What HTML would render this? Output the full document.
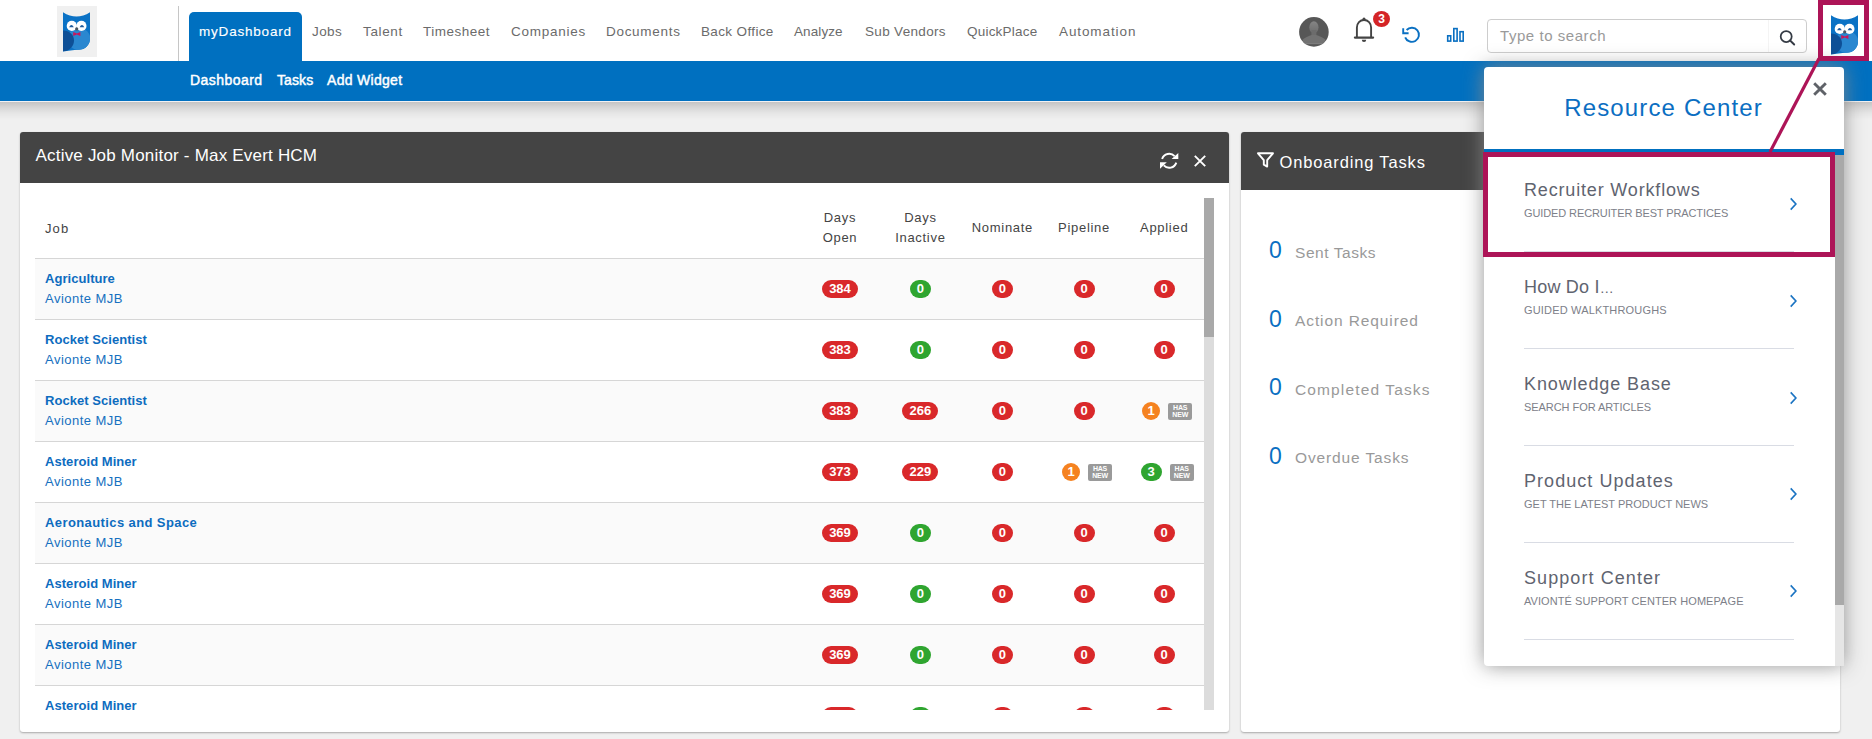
<!DOCTYPE html>
<html><head><meta charset="utf-8">
<style>
*{box-sizing:border-box;margin:0;padding:0}
html,body{width:1872px;height:739px;overflow:hidden;background:#f0f0f0;font-family:"Liberation Sans",sans-serif;position:relative}
.a{position:absolute}
#top{position:absolute;left:0;top:0;width:1872px;height:61px;background:#fff}
#logo{position:absolute;left:57px;top:6px;width:40px;height:51px;background:#f0f0f0}
#vdiv{position:absolute;left:178px;top:6px;width:1px;height:55px;background:#c6c6c6}
.nav{position:absolute;top:22.7px;font-size:13.5px;color:#6b6b6b;letter-spacing:.6px;white-space:nowrap;line-height:18px}
#tab{position:absolute;left:189px;top:12px;width:113px;height:50px;background:#0070c0;border-radius:5px 5px 0 0}
#sub{position:absolute;left:0;top:61px;width:1872px;height:40px;background:#0070c0}
#subl{position:absolute;left:0;top:101px;width:1872px;height:1px;background:#f1f1f3}
#subs{position:absolute;left:0;top:102px;width:1872px;height:18px;background:linear-gradient(rgba(0,0,0,.185),rgba(0,0,0,.11) 30%,rgba(0,0,0,.045) 62%,rgba(0,0,0,0))}
.subi{position:absolute;top:71px;font-size:14px;color:#fff;line-height:18px;font-weight:normal;-webkit-text-stroke:.45px #fff;white-space:nowrap}
.panel{position:absolute;top:132px;height:600px;background:#fff;border-radius:3px;box-shadow:0 1px 2px rgba(0,0,0,.3)}
.ph{position:absolute;left:0;top:0;right:0;background:#444;border-radius:3px 3px 0 0}
.ptitle{position:absolute;color:#fff;font-size:17px;line-height:20px;white-space:nowrap}
#tbl{position:absolute;left:35px;top:198px;width:1179px;height:512px;overflow:hidden}
.th{position:absolute;font-size:13px;color:#444;line-height:20px;text-align:center;white-space:nowrap;letter-spacing:.7px}
.tr{position:absolute;left:0;width:1169px;height:61px;border-top:1px solid #d6d6d6}
.jt{position:absolute;left:10px;top:10px;font-size:13px;font-weight:bold;color:#0d6cbf;line-height:20px;white-space:nowrap;letter-spacing:.05px}
.jc{position:absolute;left:10px;top:29.6px;font-size:13px;color:#1670c0;line-height:20px;white-space:nowrap;letter-spacing:.47px}
.cell{position:absolute;top:21px;width:100px;height:18px;display:flex;justify-content:center;align-items:center;gap:8px}
.bd{display:inline-block;height:18px;border-radius:9px;color:#fff;font-weight:bold;font-size:13px;line-height:18px;text-align:center}
.hn{display:inline-block;width:24px;height:17px;background:#9a9a9a;border-radius:2px;color:#fff;font-weight:bold;font-size:7px;line-height:7.5px;text-align:center;padding-top:1px;letter-spacing:-.2px}
#sb{position:absolute;left:1204px;top:198px;width:10px;height:512px;background:#dcdcdc}
#sbt{position:absolute;left:0;top:0;width:10px;height:139px;background:#a9a9a9}
.obr{position:absolute;left:0;height:30px;white-space:nowrap}
.obn{position:absolute;left:1px;top:-2px;font-size:23px;color:#0a6fc2;line-height:26px}
.obl{position:absolute;left:27px;top:3.6px;font-size:15.5px;color:#999;line-height:20px;letter-spacing:.8px}
#rc{position:absolute;left:1484px;top:67px;width:360px;height:599px;background:#fff;border-radius:4px;box-shadow:0 0 20px rgba(138,138,138,.9)}
#rctitle{position:absolute;left:80.2px;top:27px;font-size:24px;color:#0b6ec2;letter-spacing:1.15px;line-height:28px;white-space:nowrap}
#rcbar{position:absolute;left:0;top:82px;width:360px;height:6px;background:#0070c0}
#rclist{position:absolute;left:0;top:88px;width:351px;height:511px;overflow:hidden}
.rci{position:absolute;left:0;width:351px;height:97px}
.rct{position:absolute;left:40px;top:24px;font-size:18px;color:#5f6470;line-height:22px;letter-spacing:.8px;white-space:nowrap}
.rcs{position:absolute;left:40px;top:51px;font-size:11px;color:#7d8089;line-height:14px;white-space:nowrap;letter-spacing:-.05px}
.chev{position:absolute;left:305px;top:41.8px}
.rsep{position:absolute;left:40px;top:96px;width:270px;height:1px;background:#d9dce4}
#rcsb{position:absolute;left:351px;top:88px;width:9px;height:511px;background:#e6e6e6}
#rcsbt{position:absolute;left:0;top:0;width:9px;height:450px;background:#a9a9a9}
</style></head><body>
<div id="top">
  <div id="logo"><div class="a" style="left:5.5px;top:6px"><svg width="27" height="40" viewBox="0 0 27 40"><defs><clipPath id="c1"><path d="M0 0.2 Q13.5 8.8 27 0.2 V26.5 A11.2 11.2 0 0 1 15.8 37.8 C10 37.8 5 39.3 0 39.5 Z"/></clipPath></defs>
<g clip-path="url(#c1)"><rect x="0" y="0" width="27" height="40" fill="#0b72c5"/>
<ellipse cx="16" cy="27" rx="11.5" ry="11" fill="#2a87d0"/>
<path d="M0 18.6 C6.5 18.6 11 23 11 28.5 C11 34.5 6 39 0 39.6 Z" fill="#0e4f96"/></g>
<circle cx="8.8" cy="13.9" r="5.1" fill="#fff"/><circle cx="18.4" cy="13.9" r="5.1" fill="#fff"/>
<path d="M6.1 15.2 Q8.45 10.6 10.8 15.2 Z M16.6 15.2 Q18.95 10.6 21.3 15.2 Z" fill="#1f5c9e"/>
<circle cx="13.7" cy="16.9" r="1.6" fill="#4a5560"/>
<path d="M10.2 20 L13.8 21.4 L17.4 20 V23.9 L13.8 22.6 L10.2 23.9 Z" fill="#c8175c"/>
</svg></div></div>
  <div id="vdiv"></div>
  <div id="tab"></div>
  <div class="nav" style="left:199px;color:#fff;letter-spacing:.8px;-webkit-text-stroke:.15px #fff">myDashboard</div>
  <div class="nav" style="left:312px;letter-spacing:0.43px">Jobs</div>
  <div class="nav" style="left:363px;letter-spacing:0.64px">Talent</div>
  <div class="nav" style="left:423px;letter-spacing:0.5px">Timesheet</div>
  <div class="nav" style="left:511px;letter-spacing:0.75px">Companies</div>
  <div class="nav" style="left:606px;letter-spacing:0.7px">Documents</div>
  <div class="nav" style="left:701px;letter-spacing:0.36px">Back Office</div>
  <div class="nav" style="left:794px;letter-spacing:0.1px">Analyze</div>
  <div class="nav" style="left:865px;letter-spacing:0.33px">Sub Vendors</div>
  <div class="nav" style="left:967px;letter-spacing:0.21px">QuickPlace</div>
  <div class="nav" style="left:1059px;letter-spacing:0.9px">Automation</div>
  <!-- avatar -->
  <svg class="a" style="left:1298px;top:16px" width="32" height="32" viewBox="0 0 32 32">
    <defs><clipPath id="av"><circle cx="15.9" cy="15.9" r="14.8"/></clipPath>
    <linearGradient id="hg" x1="0" y1="0" x2="0" y2="1"><stop offset="0" stop-color="#858585"/><stop offset="1" stop-color="#6c6c6c"/></linearGradient></defs>
    <circle cx="15.9" cy="15.9" r="14.8" fill="#575757"/>
    <g clip-path="url(#av)">
      <ellipse cx="15.9" cy="11.2" rx="4.6" ry="6" fill="url(#hg)"/>
      <rect x="13.4" y="14" width="5" height="6" fill="#6c6c6c"/>
      <path d="M4.6 23.4 C7.5 21.3 11 19.6 13.6 19 H18.2 C21 19.6 24.5 21.3 27.4 23.4 L26.6 28 H5.4 Z" fill="#727272"/>
      <rect x="5.4" y="27" width="21.2" height="1.2" fill="#7c7c7c"/>
    </g>
  </svg>
  <!-- bell -->
  <svg class="a" style="left:1352px;top:16px" width="24" height="28" viewBox="0 0 24 28">
    <circle cx="12" cy="3.2" r="1.6" fill="#444"/>
    <path d="M4.9 21 V11.5 C4.9 7 8 4 12 4 C16 4 19.1 7 19.1 11.5 V21" fill="none" stroke="#444" stroke-width="1.9"/>
    <path d="M2.9 21.6 H21.1" stroke="#444" stroke-width="2.2" stroke-linecap="round"/>
    <path d="M9.8 23.8 H14.2 A2.2 2.2 0 0 1 9.8 23.8 Z" fill="#444"/>
  </svg>
  <div class="a" style="left:1373px;top:11px;width:17px;height:16px;border-radius:50%;background:#d42426;color:#fff;font-weight:bold;font-size:12px;line-height:16px;text-align:center">3</div>
  <!-- refresh -->
  <svg class="a" style="left:1400px;top:24px" width="22" height="20" viewBox="0 0 22 20">
    <path d="M6.6 6.0 A7.1 7.1 0 1 1 5.2 13.3" fill="none" stroke="#0a70c2" stroke-width="1.9"/>
    <path d="M3.2 4.3 V9.2 H8.6" fill="none" stroke="#0a70c2" stroke-width="1.9"/>
  </svg>
  <!-- bars -->
  <svg class="a" style="left:1446px;top:27px" width="19" height="16" viewBox="0 0 19 16">
    <rect x="1.7" y="8.8" width="3" height="5.3" fill="none" stroke="#0a70c2" stroke-width="1.6"/>
    <rect x="7.8" y="1.6" width="3.3" height="12.5" fill="none" stroke="#0a70c2" stroke-width="1.6"/>
    <rect x="14" y="4.7" width="3.2" height="9.4" fill="none" stroke="#0a70c2" stroke-width="1.6"/>
  </svg>
  <!-- search -->
  <div class="a" style="left:1487px;top:19px;width:320px;height:34px;border:1px solid #cdcdcd;border-radius:4px;background:#fff"></div>
  <div class="a" style="left:1768px;top:20px;width:1px;height:32px;background:#f4f4f4"></div>
  <div class="a" style="left:1500px;top:27px;font-size:15px;color:#9a9a9a;line-height:18px;letter-spacing:.55px;white-space:nowrap">Type to search</div>
  <svg class="a" style="left:1777px;top:29px" width="20" height="18" viewBox="0 0 20 18">
    <circle cx="9.2" cy="7.6" r="5.5" fill="none" stroke="#343a44" stroke-width="1.75"/>
    <path d="M13.1 11.5 L17.2 15.5" stroke="#343a44" stroke-width="1.9" stroke-linecap="round"/>
  </svg>
</div>
<div id="sub"></div><div id="subl"></div><div id="subs"></div>
<div class="subi" style="left:190px;letter-spacing:.45px">Dashboard</div>
<div class="subi" style="left:277px;letter-spacing:.1px">Tasks</div>
<div class="subi" style="left:327px;letter-spacing:.3px">Add Widget</div>

<div class="panel" style="left:20px;width:1209px">
  <div class="ph" style="height:51px"></div>
  <div class="ptitle" style="left:15.5px;top:14px;letter-spacing:.2px">Active Job Monitor - Max Evert HCM</div>
  <svg class="a" style="left:1139px;top:20px" width="22" height="20" viewBox="0 0 22 20">
    <path d="M3.1 7.0 A7.4 7.4 0 0 1 15.6 4.2" fill="none" stroke="#fff" stroke-width="1.9"/>
    <path d="M17.3 10.6 A7.4 7.4 0 0 1 4.8 13.4" fill="none" stroke="#fff" stroke-width="1.9"/>
    <path d="M12.6 7.1 H19.3 V0.9 Z" fill="#fff"/>
    <path d="M1 16.8 V10.3 H7.8 Z" fill="#fff"/>
  </svg>
  <svg class="a" style="left:1172.5px;top:22px" width="14" height="14" viewBox="0 0 14 14">
    <path d="M1.8 1.8 L12.2 12.2 M12.2 1.8 L1.8 12.2" stroke="#fff" stroke-width="1.9"/>
  </svg>
</div>
<div id="tbl">
  <div class="th" style="left:10px;top:20.5px;text-align:left;letter-spacing:1.1px">Job</div>
  <div class="th" style="left:755px;top:10px;width:100px">Days<br>Open</div>
  <div class="th" style="left:835.4px;top:10px;width:100px">Days<br>Inactive</div>
  <div class="th" style="left:917.4px;top:20px;width:100px">Nominate</div>
  <div class="th" style="left:999px;top:20px;width:100px">Pipeline</div>
  <div class="th" style="left:1079.2px;top:20px;width:100px">Applied</div>
<div class="tr" style="top:60px;background:#fafafa"><div class="jt">Agriculture</div><div class="jc">Avionte MJB</div><div class="cell" style="left:755.0px"><span class="bd" style="background:#d9282a;width:36px">384</span></div><div class="cell" style="left:835.4px"><span class="bd" style="background:#2fa530;width:21px">0</span></div><div class="cell" style="left:917.4px"><span class="bd" style="background:#d9282a;width:21px">0</span></div><div class="cell" style="left:999.0px"><span class="bd" style="background:#d9282a;width:21px">0</span></div><div class="cell" style="left:1079.2px"><span class="bd" style="background:#d9282a;width:21px">0</span></div></div>
<div class="tr" style="top:121px;background:#fff"><div class="jt">Rocket Scientist</div><div class="jc">Avionte MJB</div><div class="cell" style="left:755.0px"><span class="bd" style="background:#d9282a;width:36px">383</span></div><div class="cell" style="left:835.4px"><span class="bd" style="background:#2fa530;width:21px">0</span></div><div class="cell" style="left:917.4px"><span class="bd" style="background:#d9282a;width:21px">0</span></div><div class="cell" style="left:999.0px"><span class="bd" style="background:#d9282a;width:21px">0</span></div><div class="cell" style="left:1079.2px"><span class="bd" style="background:#d9282a;width:21px">0</span></div></div>
<div class="tr" style="top:182px;background:#fafafa"><div class="jt">Rocket Scientist</div><div class="jc">Avionte MJB</div><div class="cell" style="left:755.0px"><span class="bd" style="background:#d9282a;width:36px">383</span></div><div class="cell" style="left:835.4px"><span class="bd" style="background:#d9282a;width:36px">266</span></div><div class="cell" style="left:917.4px"><span class="bd" style="background:#d9282a;width:21px">0</span></div><div class="cell" style="left:999.0px"><span class="bd" style="background:#d9282a;width:21px">0</span></div><div class="cell" style="left:1082.2px"><span class="bd" style="background:#f58220;width:18px">1</span><span class="hn">HAS<br>NEW</span></div></div>
<div class="tr" style="top:243px;background:#fff"><div class="jt">Asteroid Miner</div><div class="jc">Avionte MJB</div><div class="cell" style="left:755.0px"><span class="bd" style="background:#d9282a;width:36px">373</span></div><div class="cell" style="left:835.4px"><span class="bd" style="background:#d9282a;width:36px">229</span></div><div class="cell" style="left:917.4px"><span class="bd" style="background:#d9282a;width:21px">0</span></div><div class="cell" style="left:1002.0px"><span class="bd" style="background:#f58220;width:18px">1</span><span class="hn">HAS<br>NEW</span></div><div class="cell" style="left:1082.2px"><span class="bd" style="background:#2fa530;width:21px">3</span><span class="hn">HAS<br>NEW</span></div></div>
<div class="tr" style="top:304px;background:#fafafa"><div class="jt" style="letter-spacing:.4px">Aeronautics and Space</div><div class="jc">Avionte MJB</div><div class="cell" style="left:755.0px"><span class="bd" style="background:#d9282a;width:36px">369</span></div><div class="cell" style="left:835.4px"><span class="bd" style="background:#2fa530;width:21px">0</span></div><div class="cell" style="left:917.4px"><span class="bd" style="background:#d9282a;width:21px">0</span></div><div class="cell" style="left:999.0px"><span class="bd" style="background:#d9282a;width:21px">0</span></div><div class="cell" style="left:1079.2px"><span class="bd" style="background:#d9282a;width:21px">0</span></div></div>
<div class="tr" style="top:365px;background:#fff"><div class="jt">Asteroid Miner</div><div class="jc">Avionte MJB</div><div class="cell" style="left:755.0px"><span class="bd" style="background:#d9282a;width:36px">369</span></div><div class="cell" style="left:835.4px"><span class="bd" style="background:#2fa530;width:21px">0</span></div><div class="cell" style="left:917.4px"><span class="bd" style="background:#d9282a;width:21px">0</span></div><div class="cell" style="left:999.0px"><span class="bd" style="background:#d9282a;width:21px">0</span></div><div class="cell" style="left:1079.2px"><span class="bd" style="background:#d9282a;width:21px">0</span></div></div>
<div class="tr" style="top:426px;background:#fafafa"><div class="jt">Asteroid Miner</div><div class="jc">Avionte MJB</div><div class="cell" style="left:755.0px"><span class="bd" style="background:#d9282a;width:36px">369</span></div><div class="cell" style="left:835.4px"><span class="bd" style="background:#2fa530;width:21px">0</span></div><div class="cell" style="left:917.4px"><span class="bd" style="background:#d9282a;width:21px">0</span></div><div class="cell" style="left:999.0px"><span class="bd" style="background:#d9282a;width:21px">0</span></div><div class="cell" style="left:1079.2px"><span class="bd" style="background:#d9282a;width:21px">0</span></div></div>
<div class="tr" style="top:487px;background:#fff"><div class="jt">Asteroid Miner</div><div class="jc">Avionte MJB</div><div class="cell" style="left:755.0px"><span class="bd" style="background:#d9282a;width:36px">369</span></div><div class="cell" style="left:835.4px"><span class="bd" style="background:#2fa530;width:21px">0</span></div><div class="cell" style="left:917.4px"><span class="bd" style="background:#d9282a;width:21px">0</span></div><div class="cell" style="left:999.0px"><span class="bd" style="background:#d9282a;width:21px">0</span></div><div class="cell" style="left:1079.2px"><span class="bd" style="background:#d9282a;width:21px">0</span></div></div>
</div>
<div id="sb"><div id="sbt"></div></div>

<div class="panel" style="left:1241px;width:599px">
  <div class="ph" style="height:58px"></div>
  <svg class="a" style="left:15px;top:20px" width="19" height="18" viewBox="0 0 19 18">
    <path d="M2 1.3 H17 L11.2 8.2 V14.6 L7.8 12.7 V8.2 Z" fill="none" stroke="#fff" stroke-width="1.9" stroke-linejoin="round"/>
  </svg>
  <div class="ptitle" style="left:38.5px;top:20px;font-size:16.5px;letter-spacing:.85px">Onboarding Tasks</div>
  <div class="a" style="left:27px;top:107px;width:300px;height:300px"><div class="obr" style="top:0.0px"><span class="obn">0</span><span class="obl" style="letter-spacing:0.56px">Sent Tasks</span></div><div class="obr" style="top:68.5px"><span class="obn">0</span><span class="obl" style="letter-spacing:0.9px">Action Required</span></div><div class="obr" style="top:137.0px"><span class="obn">0</span><span class="obl" style="letter-spacing:1.13px">Completed Tasks</span></div><div class="obr" style="top:205.5px"><span class="obn">0</span><span class="obl" style="letter-spacing:0.87px">Overdue Tasks</span></div></div>
</div>

<div id="rc">
  <svg class="a" style="left:327px;top:13px" width="18" height="18" viewBox="0 0 18 18">
    <path d="M3.2 3.2 L14.8 14.8 M14.8 3.2 L3.2 14.8" stroke="#5f6268" stroke-width="2.9"/>
  </svg>
  <div id="rctitle">Resource Center</div>
  <div id="rcbar"></div>
  <div id="rclist"><div class="rci" style="top:0.0px"><div class="rct" style="letter-spacing:.83px">Recruiter Workflows</div><div class="rcs" style="letter-spacing:-.11px">GUIDED RECRUITER BEST PRACTICES</div><svg class="chev" width="9" height="14" viewBox="0 0 9 14"><path d="M1.7 1.4 L6.9 7 L1.7 12.6" fill="none" stroke="#1a73c2" stroke-width="1.6"/></svg><div class="rsep"></div></div><div class="rci" style="top:96.9px"><div class="rct" style="letter-spacing:.2px">How Do I<span style="font-size:14px;letter-spacing:0">…</span></div><div class="rcs" style="letter-spacing:.17px">GUIDED WALKTHROUGHS</div><svg class="chev" width="9" height="14" viewBox="0 0 9 14"><path d="M1.7 1.4 L6.9 7 L1.7 12.6" fill="none" stroke="#1a73c2" stroke-width="1.6"/></svg><div class="rsep"></div></div><div class="rci" style="top:193.8px"><div class="rct" style="letter-spacing:.9px">Knowledge Base</div><div class="rcs" style="letter-spacing:-.06px">SEARCH FOR ARTICLES</div><svg class="chev" width="9" height="14" viewBox="0 0 9 14"><path d="M1.7 1.4 L6.9 7 L1.7 12.6" fill="none" stroke="#1a73c2" stroke-width="1.6"/></svg><div class="rsep"></div></div><div class="rci" style="top:290.7px"><div class="rct" style="letter-spacing:1.05px">Product Updates</div><div class="rcs" style="letter-spacing:0px">GET THE LATEST PRODUCT NEWS</div><svg class="chev" width="9" height="14" viewBox="0 0 9 14"><path d="M1.7 1.4 L6.9 7 L1.7 12.6" fill="none" stroke="#1a73c2" stroke-width="1.6"/></svg><div class="rsep"></div></div><div class="rci" style="top:387.6px"><div class="rct" style="letter-spacing:1.08px">Support Center</div><div class="rcs" style="letter-spacing:.07px">AVIONTÉ SUPPORT CENTER HOMEPAGE</div><svg class="chev" width="9" height="14" viewBox="0 0 9 14"><path d="M1.7 1.4 L6.9 7 L1.7 12.6" fill="none" stroke="#1a73c2" stroke-width="1.6"/></svg><div class="rsep"></div></div></div>
  <div id="rcsb"><div id="rcsbt"></div></div>
</div>
<!-- highlight -->
<div class="a" style="left:1483px;top:152px;width:352px;height:105px;border:5px solid #ad1457"></div>
<div class="a" style="left:1818px;top:0px;width:51px;height:61px;border:5px solid #ad1457"></div>
<div class="a" style="left:1831px;top:14.5px"><svg width="27" height="40" viewBox="0 0 27 40"><defs><clipPath id="c2"><path d="M0 0.2 Q13.5 8.8 27 0.2 V26.5 A11.2 11.2 0 0 1 15.8 37.8 C10 37.8 5 39.3 0 39.5 Z"/></clipPath></defs>
<g clip-path="url(#c2)"><rect x="0" y="0" width="27" height="40" fill="#0b72c5"/>
<ellipse cx="16" cy="27" rx="11.5" ry="11" fill="#2a87d0"/>
<path d="M0 18.6 C6.5 18.6 11 23 11 28.5 C11 34.5 6 39 0 39.6 Z" fill="#0e4f96"/></g>
<circle cx="8.8" cy="13.9" r="5.1" fill="#fff"/><circle cx="18.4" cy="13.9" r="5.1" fill="#fff"/>
<path d="M6.1 15.2 Q8.45 10.6 10.8 15.2 Z M16.6 15.2 Q18.95 10.6 21.3 15.2 Z" fill="#1f5c9e"/>
<circle cx="13.7" cy="16.9" r="1.6" fill="#4a5560"/>
<path d="M10.2 20 L13.8 21.4 L17.4 20 V23.9 L13.8 22.6 L10.2 23.9 Z" fill="#c8175c"/>
</svg></div>
<svg class="a" style="left:1760px;top:55px" width="65" height="102" viewBox="0 0 65 102">
  <path d="M59 3.5 L10 97" stroke="#ad1457" stroke-width="3.2"/>
</svg>
</body></html>
